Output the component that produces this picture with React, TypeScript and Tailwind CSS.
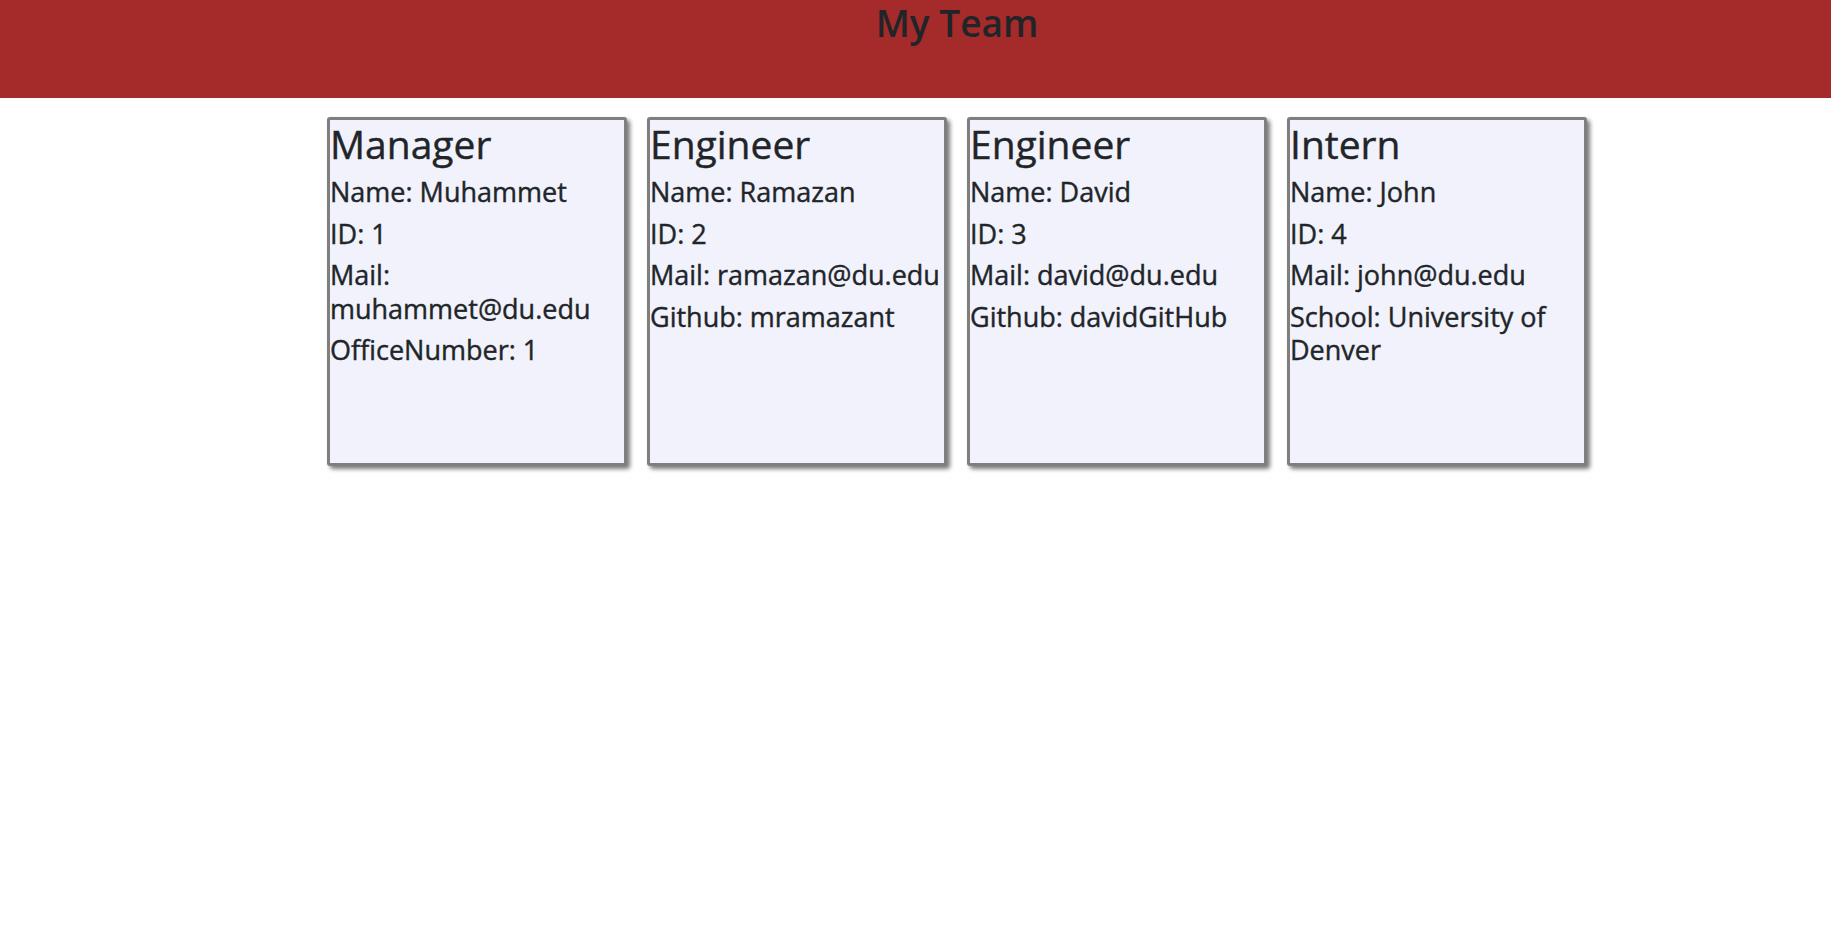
const team = [
  { role: "Manager", lines: ["Name: Muhammet", "ID: 1", "Mail: muhammet@du.edu", "OfficeNumber: 1"] },
  { role: "Engineer", lines: ["Name: Ramazan", "ID: 2", "Mail: ramazan@du.edu", "Github: mramazant"] },
  { role: "Engineer", lines: ["Name: David", "ID: 3", "Mail: david@du.edu", "Github: davidGitHub"] },
  { role: "Intern", lines: ["Name: John", "ID: 4", "Mail: john@du.edu", "School: University of Denver"] },
];

export default function App() {
  return (
    <div className="min-h-screen bg-white text-[#212529] font-['Open_Sans',sans-serif]">
      {/* header */}
      <header className="h-[98px] bg-[#a52a2a] flex justify-center pl-[83px]">
        <h1 className="mt-[-1px] text-[37px] leading-[48px] font-semibold">My Team</h1>
      </header>

      {/* cards */}
      <div className="flex justify-center pl-[83px] mt-[19px]">
        {team.map((m, i) => (
          <div
            key={i}
            className="mx-[10px] w-[300px] h-[349px] bg-[#f1f2fb] border-[3px] border-[#7f7f7f] rounded-[3px] shadow-[3px_3px_4px_#7a7a7a] pt-[1px] [-webkit-text-stroke:0.4px_#212529]"
          >
            <h2 className="text-[39px] leading-[45px] mb-[9px]">{m.role}</h2>
            {m.lines.map((l) => (
              <h3 key={l} className="text-[27px] leading-[33.6px] mb-2">
                {l}
              </h3>
            ))}
          </div>
        ))}
      </div>
    </div>
  );
}
